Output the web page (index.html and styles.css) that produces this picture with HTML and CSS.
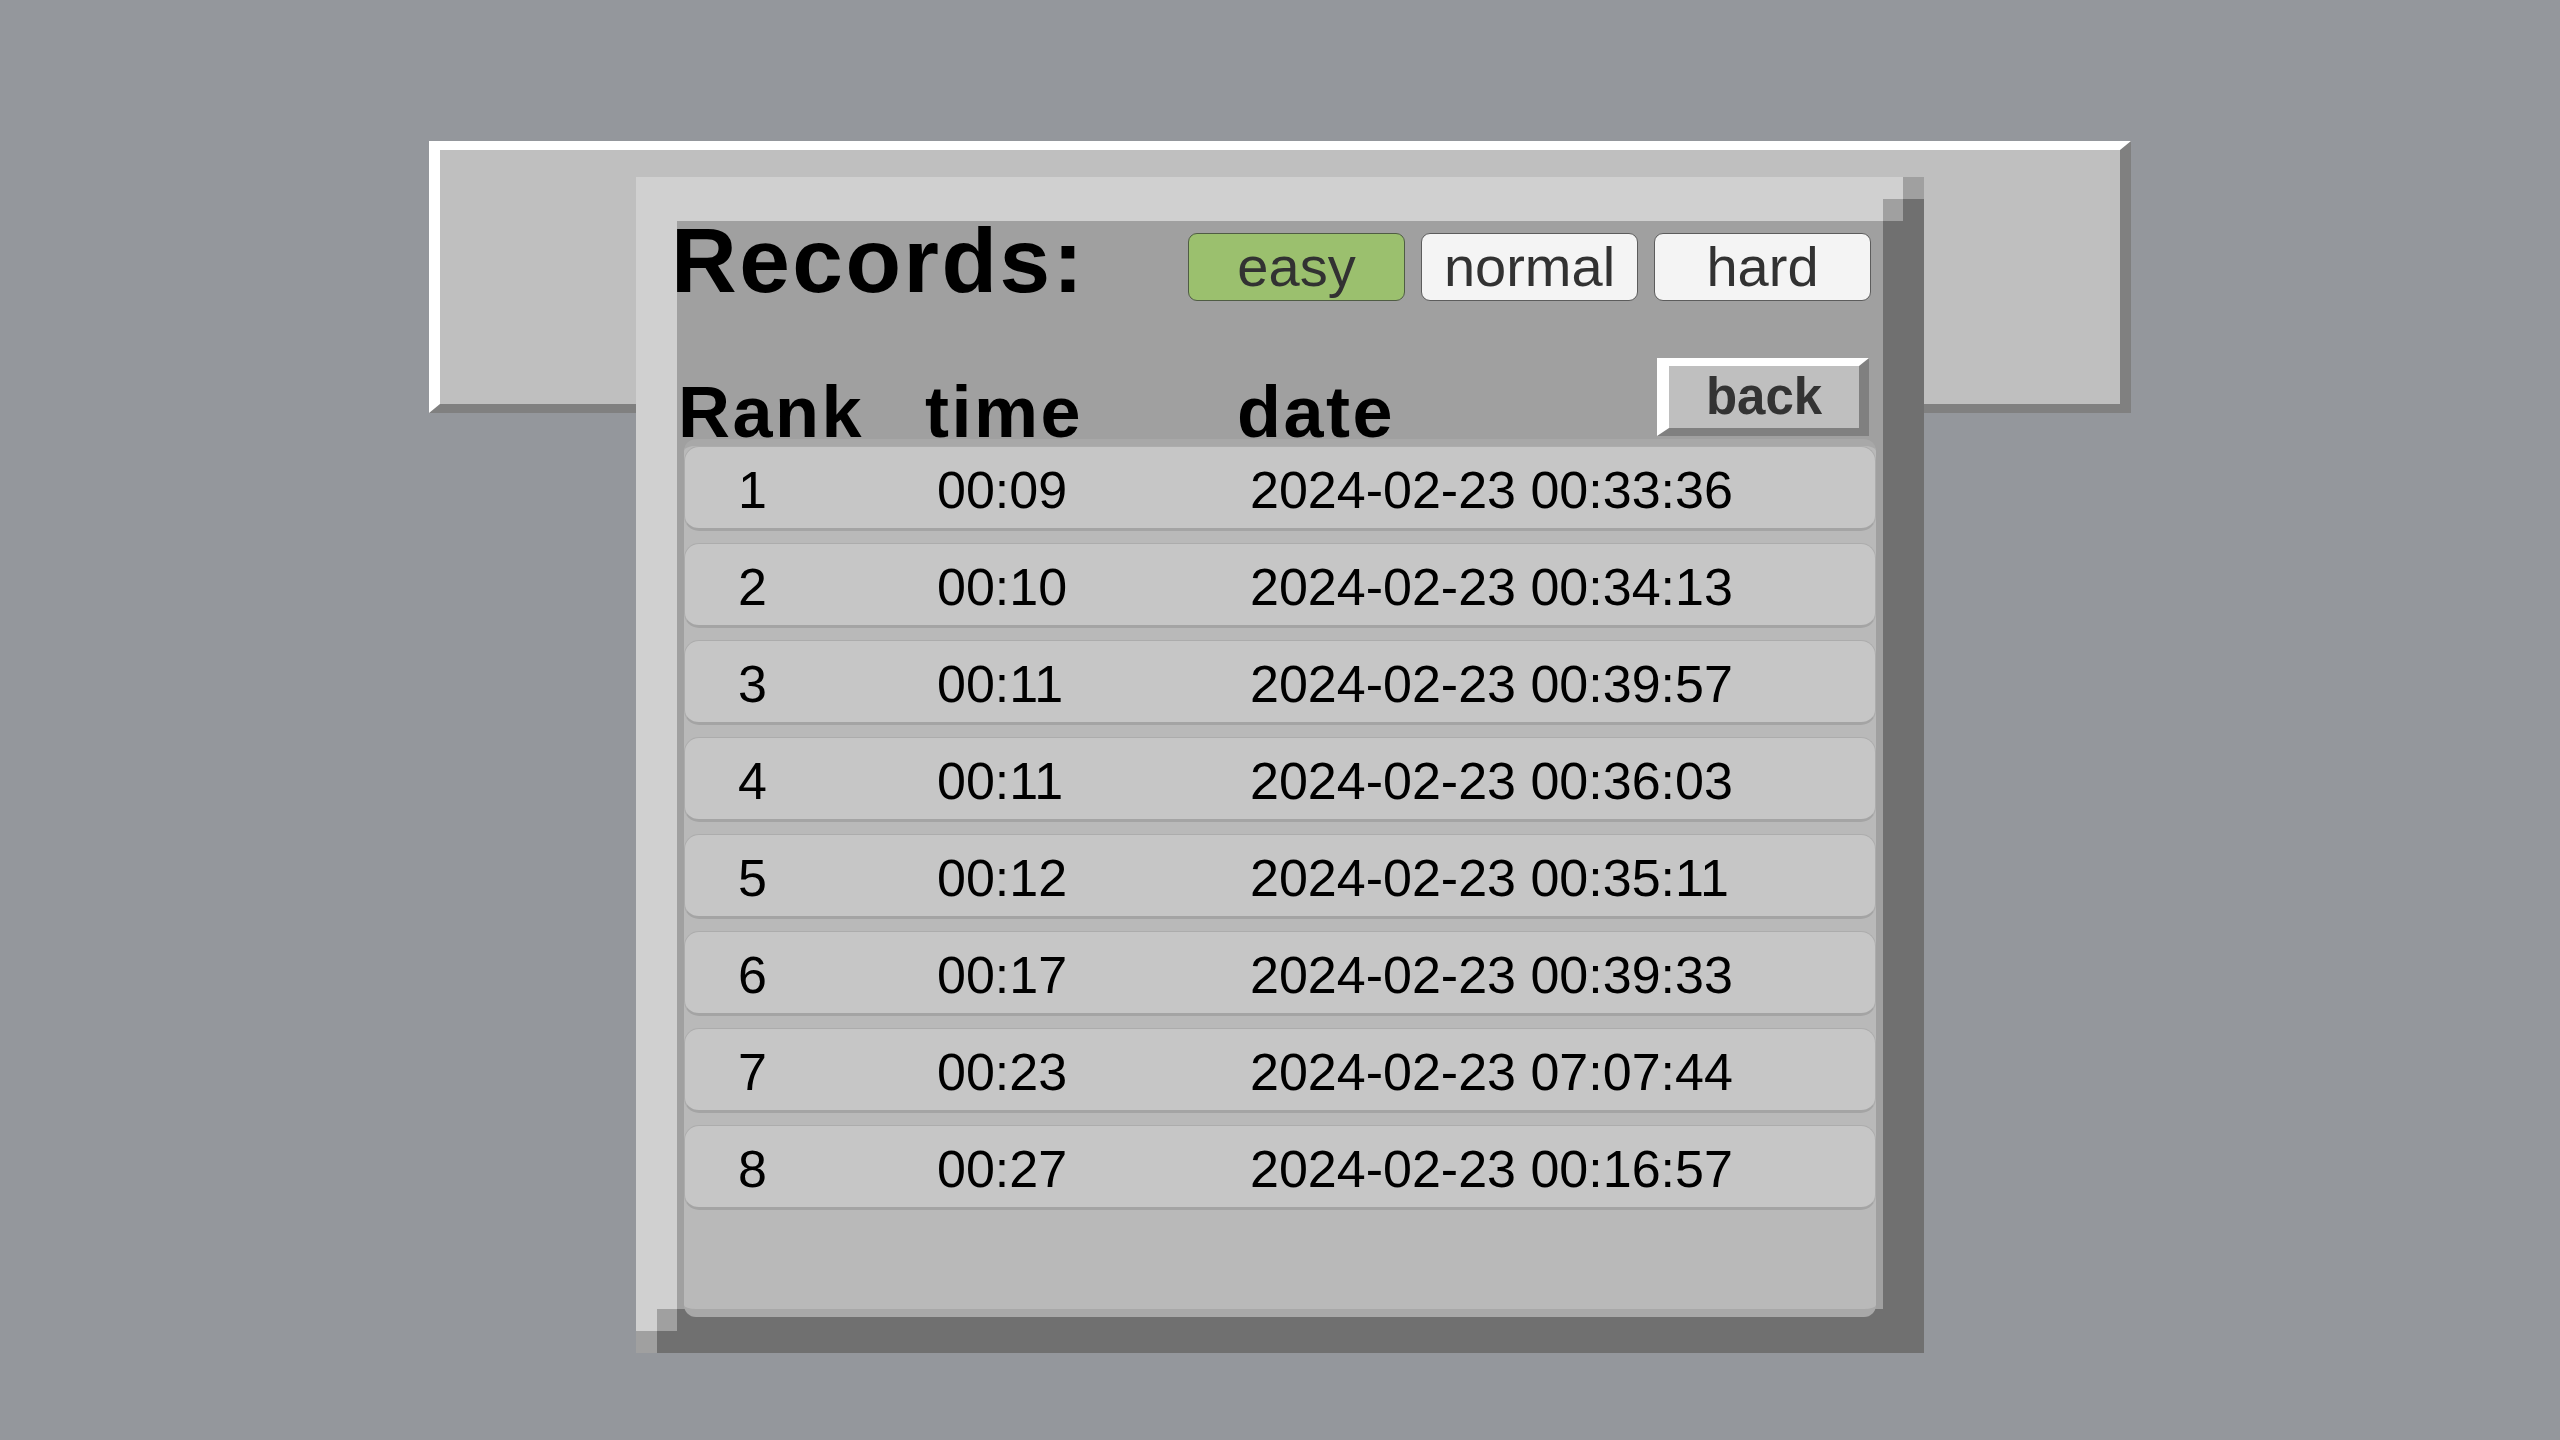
FILE: index.html
```html
<!DOCTYPE html>
<html lang="en">
<head>
<meta charset="utf-8">
<title>Records</title>
<link rel="stylesheet" href="styles.css">
</head>
<body>
<div class="desktop">
  <div class="menu-panel"></div>
  <div class="window">
    <div class="window-inner">
      <div class="window-body">
        <div class="title-row">
          <h1 class="title">Records:</h1>
          <div class="modes">
            <button class="mode mode-active">easy</button>
            <button class="mode">normal</button>
            <button class="mode">hard</button>
          </div>
        </div>
        <div class="head-row">
          <div class="cols">
            <span>Rank</span><span>time</span><span>date</span>
          </div>
          <button class="back">back</button>
        </div>
        <div class="list">
          <div class="row"><span>1</span><span>00:09</span><span>2024-02-23 00:33:36</span></div>
          <div class="row"><span>2</span><span>00:10</span><span>2024-02-23 00:34:13</span></div>
          <div class="row"><span>3</span><span>00:11</span><span>2024-02-23 00:39:57</span></div>
          <div class="row"><span>4</span><span>00:11</span><span>2024-02-23 00:36:03</span></div>
          <div class="row"><span>5</span><span>00:12</span><span>2024-02-23 00:35:11</span></div>
          <div class="row"><span>6</span><span>00:17</span><span>2024-02-23 00:39:33</span></div>
          <div class="row"><span>7</span><span>00:23</span><span>2024-02-23 07:07:44</span></div>
          <div class="row"><span>8</span><span>00:27</span><span>2024-02-23 00:16:57</span></div>
        </div>
      </div>
    </div>
  </div>
</div>
</body>
</html>
```

FILE: styles.css
```css
* {
  box-sizing: border-box;
}

html, body {
  margin: 0;
  padding: 0;
  background: #94979c;
  font-family: "Liberation Sans", Arial, sans-serif;
}

.desktop {
  position: relative;
  width: 2560px;
  height: 1440px;
  overflow: hidden;
  padding-top: 141px;
}

/* background menu panel */
.menu-panel {
  width: 1702px;
  height: 272px;
  margin: 0 auto;
  background: #bfbfbf;
  border-style: solid;
  border-width: 9px 11px 9px 11px;
  border-color: #ffffff #808080 #808080 #ffffff;
}

/* records window (modal overlay) */
.window {
  position: absolute;
  top: 177px;
  left: calc(50% - 644px);
  width: 1288px;
  height: 1176px;
  border-style: solid;
  border-width: 22px 21px 22px 21px;
  border-color: #d0d0d0 #707070 #707070 #d0d0d0;
}

.window-inner {
  position: relative;
  height: 100%;
  border-style: solid;
  border-width: 22px 20px 22px 20px;
  border-color: #d0d0d0 #707070 #707070 #d0d0d0;
}

.window::before,
.window::after,
.window-inner::before,
.window-inner::after {
  content: "";
  position: absolute;
  background: #a0a0a0;
  height: 22px;
}

.window::before {
  top: -22px;
  right: -21px;
  width: 21px;
}

.window::after {
  bottom: -22px;
  left: -21px;
  width: 21px;
}

.window-inner::before {
  top: -22px;
  right: -20px;
  width: 20px;
}

.window-inner::after {
  bottom: -22px;
  left: -20px;
  width: 20px;
}

.window-body {
  height: 100%;
  background: #a0a0a0;
  display: flex;
  flex-direction: column;
}

.title-row {
  display: flex;
  align-items: flex-start;
  height: 80px;
  flex: none;
}

.title {
  margin: 0 0 0 -6px;
  font-size: 91px;
  line-height: 80px;
  font-weight: bold;
  letter-spacing: 2.5px;
  color: #000;
}

.modes {
  display: flex;
  gap: 16px;
  margin: 12px 12px 0 auto;
}

.mode {
  width: 217px;
  height: 68px;
  padding: 0;
  border: 1px solid #5c5c5c;
  border-radius: 9px;
  background: #f4f4f4;
  color: #323232;
  font-family: "Liberation Sans", Arial, sans-serif;
  font-size: 56px;
  line-height: 66px;
}

.mode-active {
  background: #9bc06e;
  border-color: #4f5c44;
}

.head-row {
  display: flex;
  align-items: flex-end;
  height: 138px;
  flex: none;
}

.cols {
  display: grid;
  grid-template-columns: 247px 312px auto;
  margin-left: 1px;
  font-size: 72px;
  font-weight: bold;
  letter-spacing: 2.5px;
  line-height: 54px;
  color: #000;
}

.back {
  width: 212px;
  height: 78px;
  margin: 0 14px 3px auto;
  padding: 0;
  border-style: solid;
  border-width: 8px 10px 8px 12px;
  border-color: #ffffff #808080 #808080 #ffffff;
  border-radius: 0;
  background: #bfbfbf;
  color: #333;
  font-family: "Liberation Sans", Arial, sans-serif;
  font-size: 51px;
  font-weight: bold;
  line-height: 62px;
}

.list {
  flex: 1;
  margin: 0 7px -8px 7px;
  background: #b9b9b9;
  border-top: 7px solid #a8a8a8;
  border-bottom: 8px solid #a8a8a8;
  border-radius: 12px;
  display: flex;
  flex-direction: column;
  gap: 12px;
}

.row {
  height: 85px;
  flex: none;
  display: grid;
  grid-template-columns: 199px 313px auto;
  align-items: center;
  padding: 4px 0 0 53px;
  background: #c6c6c6;
  border: 1px solid #acacac;
  border-bottom: 3px solid #a4a4a4;
  border-radius: 15px;
  font-size: 52px;
  color: #000;
}
```
